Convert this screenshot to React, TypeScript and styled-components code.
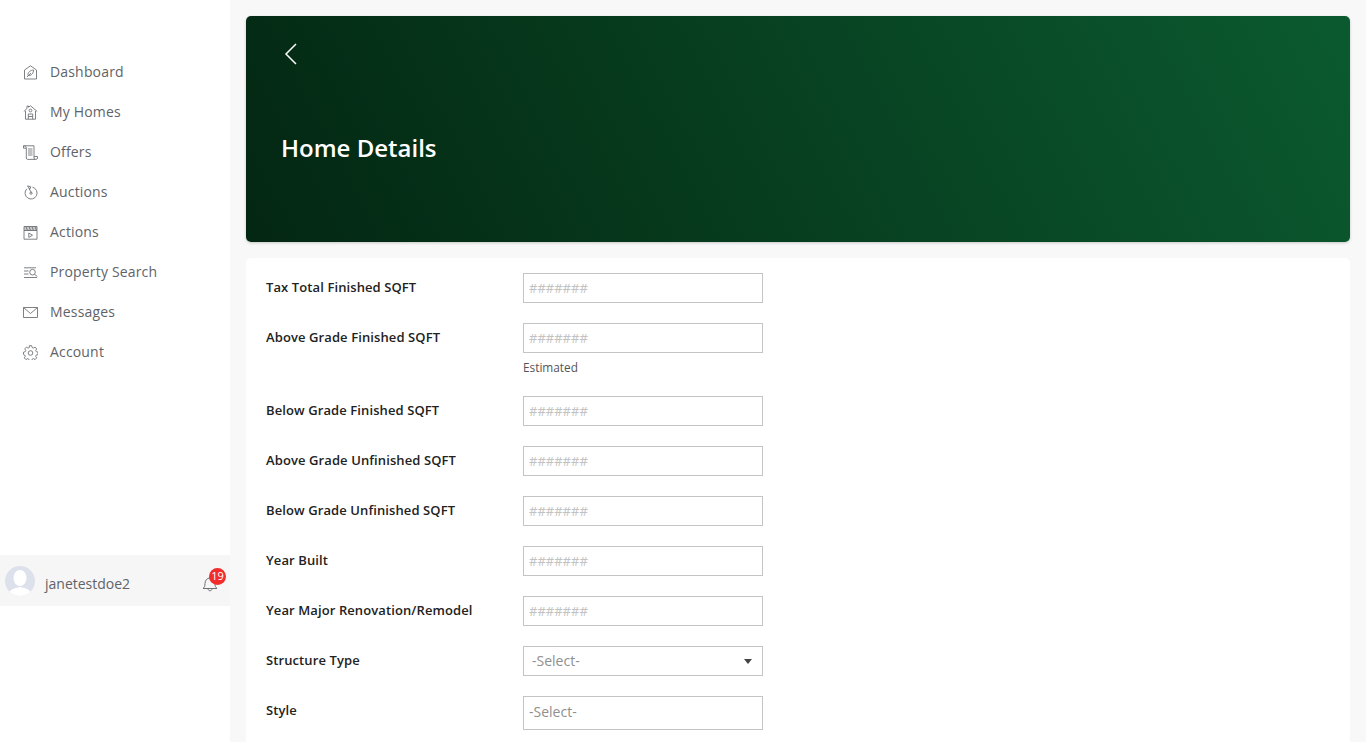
import React from "react";
import styled, { createGlobalStyle } from "styled-components";

const Global = createGlobalStyle`
  html, body { margin: 0; padding: 0; height: 100%; overflow: hidden; background: #f8f8f8; }
  body { font-family: "Open Sans", "Noto Sans", sans-serif; }
`;

const Page = styled.div`
  display: flex;
  height: 742px;
  overflow: hidden;
`;

const Sidebar = styled.aside`
  width: 230px;
  flex: none;
  background: #fff;
  display: flex;
  flex-direction: column;
  padding-top: 51px;
  box-sizing: border-box;
`;

const Nav = styled.nav`
  display: flex;
  flex-direction: column;
  height: 504px;
`;

const NavItem = styled.a`
  display: flex;
  align-items: center;
  height: 40px;
  padding-left: 23px;
  gap: 12px;
  font-size: 14px;
  color: #5f6368;
  letter-spacing: 0.17px;
  svg { width: 15px; height: 15px; flex: none; fill: none; stroke: #6f7478; stroke-width: 0.9; position: relative; top: 1px; }
`;

const UserBar = styled.div`
  height: 51px;
  background: #f6f6f6;
  display: flex;
  align-items: center;
  padding-left: 5px;
  position: relative;
`;

const Avatar = styled.div`
  width: 30px;
  height: 30px;
  border-radius: 50%;
  overflow: hidden;
  flex: none;
  svg { display: block; }
`;

const UserName = styled.span`
  margin-left: 10px;
  font-size: 14px;
  color: #5f6368;
  position: relative;
  top: 3px;
`;

const Bell = styled.div`
  position: absolute;
  left: 202px;
  top: 20px;
  svg { display: block; width: 16px; height: 17px; fill: none; stroke: #6b7075; stroke-width: 1; }
`;

const Badge = styled.span`
  position: absolute;
  left: 7px;
  top: -7px;
  width: 17px;
  height: 17px;
  border-radius: 50%;
  background: #f02c2c;
  color: #fff;
  font-size: 11px;
  font-weight: 400;
  line-height: 16px;
  text-align: center;
`;

const Main = styled.main`
  flex: 1;
  padding: 16px 16px 0;
  display: flex;
  flex-direction: column;
  gap: 16px;
  min-width: 0;
`;

const Banner = styled.header`
  height: 226px;
  flex: none;
  border-radius: 5px;
  background: linear-gradient(62deg, #032612 0%, #0b5a2f 100%);
  box-shadow: 0 1px 3px rgba(0, 0, 0, 0.2);
  padding: 27px 35px 0;
  box-sizing: border-box;
  display: flex;
  flex-direction: column;
  svg { display: block; margin-left: 3px; }
`;

const Title = styled.h1`
  margin: 66px 0 0;
  font-size: 24px;
  line-height: 33px;
  font-weight: 600;
  color: #fff;
`;

const Card = styled.section`
  flex: 1;
  background: #fff;
  border-radius: 5px 5px 0 0;
  padding: 15px 20px 0;
  display: flex;
  flex-direction: column;
  gap: 20px;
`;

const Row = styled.div`
  display: grid;
  grid-template-columns: 257px 240px;
`;

const Label = styled.label`
  font-size: 13px;
  font-weight: 600;
  line-height: 18px;
  color: #222;
  letter-spacing: 0.1px;
  padding-top: 5px;
`;

const FieldBox = styled.div<{ $h?: number }>`
  width: 240px;
  height: ${(p) => p.$h ?? 30}px;
  box-sizing: border-box;
  border: 1px solid #c4c4c4;
  background: #fff;
  display: flex;
  align-items: center;
  justify-content: space-between;
  font-size: 14px;
  color: #999;
`;

const Placeholder = styled.span`
  padding-left: 5px;
  color: #c2c2c2;
  font-size: 13px;
`;

const SelectText = styled.span<{ $pad: number; $up: number }>`
  padding-left: ${(p) => p.$pad}px;
  color: #8f8f8f;
  position: relative;
  top: -${(p) => p.$up}px;
`;

const Caret = styled.span`
  width: 0;
  height: 0;
  margin-right: 10px;
  border-left: 4px solid transparent;
  border-right: 4px solid transparent;
  border-top: 5px solid #444;
`;

const Hint = styled.div`
  margin-top: 6px;
  font-size: 11.8px;
  line-height: 16px;
  color: #555;
  height: 17px;
`;

const icons: Record<string, React.ReactNode> = {
  Dashboard: (
    <>
      <path d="M1.5 14V5L7.5 .8l6 4.200V14z" />
      <path d="M5 10.500c-.5-3 2.500-5.500 5.500-5.500.2 3-2.200 6-5.500 5.500zM4 12l4-4" />
    </>
  ),
  "My Homes": (
    <>
      <path d="M.8 6.500L4 3.500V1h1.500v1.200L7.500.8 14.200 6.500M2.500 6v8.200h10V6" />
      <circle cx="7.500" cy="5.500" r="1.400" />
      <path d="M5.300 14.200V9h4.400v5.200M5.300 11.500h4.400" />
    </>
  ),
  Offers: (
    <>
      <path d="M.5.800h10.500v12.200c0 .8.600 1.400 1.400 1.400H4.500c-.8 0-1.200-.6-1.200-1.400V2.500C3.300 1.400 2 .800.5.800zM.5.800v2.400h2.800" />
      <path d="M5 4h4.500M5 6h4.500M5 8h4.500M5 10h4.500M11 11.500h3.500v1.500c0 .8-.6 1.400-1.400 1.400h-.7" />
    </>
  ),
  Auctions: (
    <>
      <path d="M3.800 3.800a6 6 0 1 0 5.700-1.600" />
      <path d="M4.500 .9l3.300.9-.9 2.300zM5.800 3.500l2.700 4" />
      <circle cx="8" cy="8.200" r="1.100" />
    </>
  ),
  Actions: (
    <>
      <path d="M1 5.500h13v8.700H1z" />
      <path d="M1 1.500h13v4H1z" fill="#c9cbcd" />
      <path d="M3 1.500l1.500 4M6 1.500l1.500 4M9 1.500l1.500 4M12 1.500l1.500 4M5.800 8l3.700 2.200-3.700 2.200z" />
    </>
  ),
  "Property Search": (
    <>
      <path d="M1 2.800h12M1 6h4.500M1 9h4.500M1 12.500h13" />
      <circle cx="9.500" cy="7.200" r="2.800" />
      <path d="M11.500 9.300l2.800 2.200" />
    </>
  ),
  Messages: (
    <>
      <path d="M.5 2.500h14v10H.5z" />
      <path d="M.5 2.500l7 6 7-6" />
    </>
  ),
  Account: (
    <>
      <path d="M6.300.7h2.400l.4 1.800 1.300.6 1.700-1 1.600 1.700-1 1.600.6 1.300 1.700.5v2.300l-1.700.5-.6 1.300 1 1.600-1.600 1.700-1.700-1-1.300.6-.4 1.300H6.300l-.4-1.300-1.300-.6-1.700 1-1.600-1.700 1-1.600-.6-1.300L.5 9.500V7.200l1.700-.5.600-1.300-1-1.600 1.600-1.700 1.700 1 1.300-.6z" />
      <circle cx="7.500" cy="8" r="2.300" />
    </>
  ),
};

const navItems = ["Dashboard", "My Homes", "Offers", "Auctions", "Actions", "Property Search", "Messages", "Account"];

const fields: { label: string; hint?: string }[] = [
  { label: "Tax Total Finished SQFT" },
  { label: "Above Grade Finished SQFT", hint: "Estimated" },
  { label: "Below Grade Finished SQFT" },
  { label: "Above Grade Unfinished SQFT" },
  { label: "Below Grade Unfinished SQFT" },
  { label: "Year Built" },
  { label: "Year Major Renovation/Remodel" },
];

export default function App() {
  return (
    <>
      <Global />
      <Page>
        <Sidebar>
          <Nav>
            {navItems.map((n) => (
              <NavItem key={n}>
                <svg viewBox="0 0 15 15">{icons[n]}</svg>
                {n}
              </NavItem>
            ))}
          </Nav>
          <UserBar>
            <Avatar>
              <svg width="30" height="30" viewBox="0 0 30 30">
                <rect width="30" height="30" fill="#dde1ec" />
                <ellipse cx="15" cy="12" rx="6.500" ry="8" fill="#fff" />
                <path d="M3 30c1-7 7-8 12-9 5 1 11 2 12 9z" fill="#fff" />
              </svg>
            </Avatar>
            <UserName>janetestdoe2</UserName>
            <Bell>
              <svg viewBox="0 0 16 17">
                <path d="M1 13.500c1.500-1 2-2.500 2-5 0-3 2-5.500 5-5.500s5 2.500 5 5.500c0 2.500.5 4 2 5z" />
                <path d="M6 13.500c0 3 4 3 4 0" />
              </svg>
              <Badge>19</Badge>
            </Bell>
          </UserBar>
        </Sidebar>
        <Main>
          <Banner>
            <svg width="14" height="22" viewBox="0 0 14 22" fill="none" stroke="#fff" strokeWidth="1.500">
              <path d="M12 1L2 11l10 10" />
            </svg>
            <Title>Home Details</Title>
          </Banner>
          <Card>
            {fields.map((f) => (
              <Row key={f.label}>
                <Label>{f.label}</Label>
                <div>
                  <FieldBox>
                    <Placeholder>#######</Placeholder>
                  </FieldBox>
                  {f.hint && <Hint>{f.hint}</Hint>}
                </div>
              </Row>
            ))}
            <Row>
              <Label>Structure Type</Label>
              <FieldBox>
                <SelectText $pad={8} $up={1}>-Select-</SelectText>
                <Caret />
              </FieldBox>
            </Row>
            <Row>
              <Label>Style</Label>
              <FieldBox $h={34}>
                <SelectText $pad={5} $up={2}>-Select-</SelectText>
              </FieldBox>
            </Row>
          </Card>
        </Main>
      </Page>
    </>
  );
}
